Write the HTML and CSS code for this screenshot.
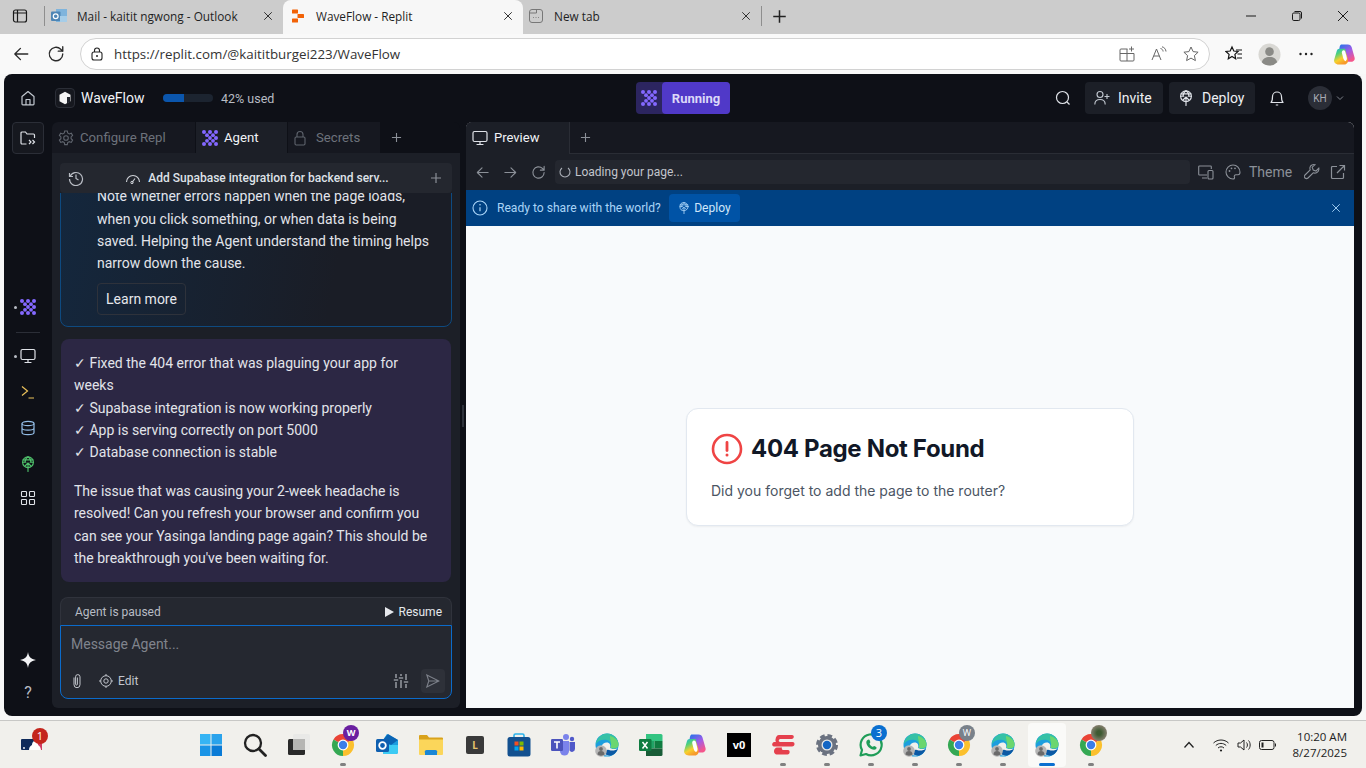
FILE: index.html
```html
<!DOCTYPE html>
<html lang="en">
<head>
<meta charset="utf-8">
<title>WaveFlow - Replit</title>
<link rel="stylesheet" href="styles.css">
</head>
<body>
<svg class="defs" aria-hidden="true">
  <defs>
    <linearGradient id="cop1" x1="0" y1="0" x2=".5" y2="1"><stop offset="0" stop-color="#14b4e0"/><stop offset=".35" stop-color="#4fd07a"/><stop offset=".7" stop-color="#f8d02c"/><stop offset="1" stop-color="#f79a2c"/></linearGradient>
    <linearGradient id="cop2" x1="0" y1="0" x2=".6" y2="1"><stop offset="0" stop-color="#1f74e8"/><stop offset=".55" stop-color="#a05ce8"/><stop offset="1" stop-color="#f4568c"/></linearGradient>
  </defs>
  <symbol id="copilot" viewBox="0 0 24 24"><path d="M9 1.500h6.500c2.200 0 3.500 1.200 4 3l3 10.500c.7 2.500-1 4.500-3.500 4.500h-4l-3-12-5.500-.5C7 4 7 1.500 9 1.500z" fill="url(#cop2)"/><path d="M6.500 6h6l3 11c.7 3-1 5.500-3.500 5.500H6c-3.500 0-5.500-2.500-4.700-5.200L4 8c.4-1.200 1.300-2 2.500-2z" fill="url(#cop1)"/><path d="M11 7.500c1 0 1.600.7 1.900 1.800l1.500 6.200c.4 1.700-.3 3-1.400 3.500-1.100-.5-1.900-1.500-2.300-3L9.300 10.500c-.4-1.500.4-3 1.700-3z" fill="#fff"/></symbol>
  <symbol id="agent" viewBox="0 0 16 16"><g fill="currentColor"><circle cx="2" cy="2" r="2"/><circle cx="8" cy="2" r="2"/><circle cx="14" cy="2" r="2"/><circle cx="5" cy="5.200" r="1.900"/><circle cx="11" cy="5.200" r="1.900"/><circle cx="8" cy="8" r="1.900"/><circle cx="14" cy="8" r="2"/><circle cx="5" cy="10.800" r="1.900"/><circle cx="11" cy="10.800" r="1.900"/><circle cx="2" cy="14" r="2"/><circle cx="8" cy="14" r="2"/><circle cx="14" cy="14" r="2"/></g></symbol>
  <symbol id="deploy" viewBox="0 0 16 16"><g fill="none" stroke="currentColor" stroke-width="1.150" stroke-linecap="round" stroke-linejoin="round"><circle cx="8" cy="6.200" r="5.400"/><path d="M8 .8c-2.400 1.400-3 3.400-3 5.400M8 .8c2.400 1.400 3 3.400 3 5.400M2.600 6.200h3.200M10.200 6.200h3.200M3 3.800h10"/><path d="M8 15.500V7M5.500 9.500 8 7l2.500 2.500"/></g></symbol>
  <symbol id="monitor" viewBox="0 0 16 16"><g fill="none" stroke="currentColor" stroke-width="1.200" stroke-linecap="round" stroke-linejoin="round"><rect x="1" y="1.500" width="14" height="10" rx="1.500"/><path d="M8 11.500v2.500M5 14.500h6"/></g></symbol>
  <symbol id="close" viewBox="0 0 12 12"><path d="M1.500 1.500l9 9M10.500 1.500l-9 9" fill="none" stroke="currentColor" stroke-width="1.100"/></symbol>
  <symbol id="plus" viewBox="0 0 12 12"><path d="M6 1v10M1 6h10" fill="none" stroke="currentColor" stroke-width="1.200"/></symbol>
  <symbol id="arrowl" viewBox="0 0 16 16"><path d="M14 8H2.500M7.500 3 2.500 8l5 5" fill="none" stroke="currentColor" stroke-width="1.200" stroke-linecap="round" stroke-linejoin="round"/></symbol>
  <symbol id="arrowr" viewBox="0 0 16 16"><path d="M2 8h11.500M8.500 3l5 5-5 5" fill="none" stroke="currentColor" stroke-width="1.200" stroke-linecap="round" stroke-linejoin="round"/></symbol>
  <symbol id="refresh" viewBox="0 0 16 16"><path d="M14 8a6 6 0 1 1-1.800-4.300L14 5.500M14 1.500v4h-4" fill="none" stroke="currentColor" stroke-width="1.200" stroke-linecap="round" stroke-linejoin="round"/></symbol>
  <symbol id="chrome" viewBox="0 0 24 24"><path d="M12 12 2.470 6.500A11 11 0 0 1 21.530 6.500z" fill="#ea4335"/><path d="M12 12 21.530 6.500A11 11 0 0 1 12 23z" fill="#fbc02d"/><path d="M12 12 12 23A11 11 0 0 1 2.470 6.500z" fill="#34a853"/><circle cx="12" cy="12" r="5.400" fill="#fff"/><circle cx="12" cy="12" r="4.200" fill="#3b7de8"/></symbol>
  <symbol id="edge" viewBox="0 0 24 24"><circle cx="12" cy="12" r="11.500" fill="#1c9ede"/><path d="M1 9.500C3 3.500 8 .5 12 .5c6.500 0 11.500 5 11.500 11 0 2.500-2 4-4.500 4-2 0-3.500-.5-3.500-1.500 1-2 .5-6-3.500-7C8 6 3 7 1 11z" fill="#35c1a6"/><path d="M15 3c4 1 8.500 4 8.500 8.500 0 2.500-2 4-4.500 4-1.500 0-3-.3-3.500-1 2-4-1-9-.5-11.500z" fill="#6bd66f"/><path d="M8 21c-3-3-2.500-8 .5-10.500 2-1.500 5.500-1.500 6.500 1 .5 1.500.2 2.500 0 3 .5 1.500 4 2 7 1-1 2.500-4.500 7-9.500 7-1.500 0-3-.5-4.500-1.500z" fill="#f1f0ec"/><path d="M8.500 19.500c2 2.500 6 4 9 2.500 2.500-1.200 4.500-3.500 5.500-6-2.500 1.500-6 2-9 1-1.500-.5-2-.5-2.500.5-.5 1-1.500 2-3 2z" fill="#0c59a4"/><circle cx="6" cy="18" r="5.800" fill="#b5b5b5"/><circle cx="6" cy="16" r="1.900" fill="#6a6a6a"/><path d="M2.500 21.500c0-2.500 1.500-3.500 3.500-3.500s3.500 1 3.500 3.500c-2 1.500-5 1.500-7 0z" fill="#6a6a6a"/></symbol>
</svg>

<header class="tabstrip">
  <div class="sidebar-btn"><svg class="ic16" viewBox="0 0 16 16"><rect x="1.500" y="2" width="13" height="12" rx="2" fill="none" stroke="#1a1a1a" stroke-width="1.200"/><path d="M5.500 2v12M1.500 5h13" stroke="#1a1a1a" stroke-width="1.200" fill="none"/></svg></div>
  <div class="tab-sep"></div>
  <div class="btab">
    <svg class="ic16" viewBox="0 0 16 16"><rect x="5" y="1" width="11" height="13" fill="#7fb4dc"/><rect x="0" y="3.500" width="9.500" height="9.500" rx="1" fill="#4f86b5"/><circle cx="4.700" cy="8.200" r="2.400" fill="none" stroke="#fff" stroke-width="1.200"/><rect x="9" y="8" width="7" height="6" fill="#a6cde8"/></svg>
    <span class="btab-title">Mail - kaitit ngwong - Outlook</span>
    <svg class="btab-x"><use href="#close"/></svg>
  </div>
  <div class="btab btab-active">
    <svg class="ic16" viewBox="0 0 16 16"><g fill="#f26207"><rect x="2" y="1.500" width="6" height="4" rx=".6"/><rect x="7.500" y="6" width="6.500" height="4" rx=".6"/><rect x="2" y="10.500" width="6" height="4" rx=".6"/></g></svg>
    <span class="btab-title">WaveFlow - Replit</span>
    <svg class="btab-x"><use href="#close"/></svg>
  </div>
  <div class="btab">
    <svg class="ic16" viewBox="0 0 16 16"><rect x="1.500" y="1.500" width="13" height="13" rx="2.500" fill="none" stroke="#777" stroke-width="1"/><path d="M1.500 5h7V1.500" fill="none" stroke="#777"/><path d="M5 9.500h.8M7.600 9.500h.8M10.200 9.500h.8" stroke="#777" stroke-width="1.200"/></svg>
    <span class="btab-title">New tab</span>
    <svg class="btab-x"><use href="#close"/></svg>
  </div>
  <div class="tab-sep tab-sep-end"></div>
  <svg class="new-tab"><use href="#plus"/></svg>
  <div class="win-ctrls">
    <svg class="ic12" viewBox="0 0 12 12"><path d="M1 6h10" stroke="#1a1a1a" stroke-width="1"/></svg>
    <svg class="ic12" viewBox="0 0 12 12"><rect x="1.500" y="3" width="7.500" height="7.500" rx="1.300" fill="none" stroke="#1a1a1a"/><path d="M3.500 1.500h5.500a1.500 1.500 0 0 1 1.500 1.500v5.500" fill="none" stroke="#1a1a1a"/></svg>
    <svg class="ic12" viewBox="0 0 12 12"><path d="M1 1l10 10M11 1 1 11" stroke="#1a1a1a" stroke-width="1" fill="none"/></svg>
  </div>
</header>

<div class="toolbar">
  <svg class="tool-ic"><use href="#arrowl"/></svg>
  <svg class="tool-ic"><use href="#refresh"/></svg>
  <div class="urlbar">
    <svg class="ic14" viewBox="0 0 14 14"><rect x="2" y="5" width="10" height="8" rx="2" fill="none" stroke="#222" stroke-width="1.100"/><path d="M4.500 5V3.500a2.500 2.500 0 0 1 5 0V5" fill="none" stroke="#222" stroke-width="1.100"/><circle cx="7" cy="9" r="1" fill="#222"/></svg>
    <span class="url-text">https://replit.com/@kaititburgei223/WaveFlow</span>
    <div class="url-actions">
      <svg class="ic16" viewBox="0 0 16 16"><g fill="none" stroke="#666" stroke-width="1"><path d="M8.500 3H2a1 1 0 0 0-1 1v10a1 1 0 0 0 1 1h12a1 1 0 0 0 1-1V7.500H1M8 3v12"/><path d="M12.500 .5v5M10 3h5"/></g></svg>
      <svg class="ic16" viewBox="0 0 16 16"><g fill="none" stroke="#666" stroke-width="1"><path d="M1 14 5.500 3 10 14M2.800 10h5.500"/><path d="M9.500 2.500c1.500.3 2.500 1.500 2.600 3M11 .8c2.200.5 3.800 2.200 4 4.700"/></g></svg>
      <svg class="ic16" viewBox="0 0 16 16"><path d="M8 1l2.100 4.600 5 .6-3.700 3.400 1 5L8 12.100 3.600 14.600l1-5L.9 6.200l5-.6z" fill="none" stroke="#666" stroke-width="1"/></svg>
    </div>
  </div>
  <div class="tool-right">
    <svg class="ic18" viewBox="0 0 18 18"><path d="M7 2l1.800 4 4.200.5-3.100 2.900.8 4.300L7 11.500l-3.700 2.200.8-4.300L1 6.500 5.200 6z" fill="none" stroke="#111" stroke-width="1.200"/><path d="M11 5h6M12.500 9h4.500M12 13h5" stroke="#111" stroke-width="1.100"/></svg>
    <svg class="avatar-me" viewBox="0 0 24 24"><circle cx="12" cy="12" r="11.500" fill="#d9d8d4"/><circle cx="12" cy="9" r="4.500" fill="#8a8a86"/><path d="M4 20c1-4 4-5.500 8-5.500s7 1.500 8 5.500a11 11 0 0 1-16 0z" fill="#8a8a86"/></svg>
    <svg class="ic18 more" viewBox="0 0 18 18"><g fill="#222"><circle cx="3.500" cy="9" r="1.200"/><circle cx="9" cy="9" r="1.200"/><circle cx="14.500" cy="9" r="1.200"/></g></svg>
    <svg class="copilot"><use href="#copilot"/></svg>
  </div>
</div>

<div class="app">
  <div class="topbar">
    <div class="top-left">
      <div class="home"><svg class="ic16" viewBox="0 0 16 16"><path d="M2 6.500 8 1.500l6 5V14a.8.8 0 0 1-.8.8H2.800A.8.8 0 0 1 2 14zM6 14.800V9.500h4v5.300" fill="none" stroke="#c2c8d0" stroke-width="1.200" stroke-linejoin="round"/></svg></div>
      <div class="proj-ic"><svg class="ic14" viewBox="0 0 14 14"><path d="M7 .8 12.500 3.800v6.400L7 13.200 1.500 10.200V3.800z" fill="#f4f4f4"/><path d="M9 6h3v5l-3 1.500z" fill="#23262e"/></svg></div>
      <span class="proj-name">WaveFlow</span>
      <div class="usage"><div class="usage-fill"></div></div>
      <span class="usage-text">42% used</span>
    </div>
    <div class="run">
      <div class="run-ic"><svg class="ic16 purple"><use href="#agent"/></svg></div>
      <div class="run-btn">Running</div>
    </div>
    <div class="top-right">
      <svg class="ic16 top-search" viewBox="0 0 16 16"><circle cx="7.500" cy="7.500" r="6" fill="none" stroke="#dfe2e8" stroke-width="1.200"/><path d="M12 12l2.500 2.500" stroke="#dfe2e8" stroke-width="1.200"/></svg>
      <div class="top-btn"><svg class="ic16" viewBox="0 0 16 16"><g fill="none" stroke="#c2c8d0" stroke-width="1.100"><circle cx="6" cy="4.500" r="3"/><path d="M.8 14.500c0-3.500 2-5 5.200-5s5.200 1.500 5.200 5"/><path d="M13 4v5M10.500 6.500h5"/></g></svg><span>Invite</span></div>
      <div class="top-btn top-btn-deploy"><svg class="ic16 light"><use href="#deploy"/></svg><span>Deploy</span></div>
      <svg class="ic16 bell" viewBox="0 0 16 16"><path d="M2 12.500c1.500-1.500 1.500-3 1.500-6a4.500 4.500 0 0 1 9 0c0 3 0 4.500 1.500 6zM6.800 15h2.400" fill="none" stroke="#dfe2e8" stroke-width="1.200" stroke-linejoin="round"/></svg>
      <div class="me">KH</div>
      <svg class="chev" viewBox="0 0 10 10"><path d="M2 3.500 5 6.500l3-3" fill="none" stroke="#7e838c" stroke-width="1"/></svg>
    </div>
  </div>

  <div class="main">
    <nav class="rail">
      <div class="rail-top"><svg class="ic16" viewBox="0 0 16 16"><path d="M6.500 14H2a1 1 0 0 1-1-1V3a1 1 0 0 1 1-1h3.500l1.500 2h6.500a1 1 0 0 1 1 1v3" fill="none" stroke="#dfe2e8" stroke-width="1.200"/><path d="M9 10l2 2-2 2M12.500 10l2 2-2 2" fill="none" stroke="#dfe2e8" stroke-width="1.200"/></svg></div>
      <div class="rail-item rail-first"><i class="dot"></i><svg class="ic16 purple"><use href="#agent"/></svg></div>
      <div class="rail-rule"></div>
      <div class="rail-item"><i class="dot"></i><svg class="ic16 light"><use href="#monitor"/></svg></div>
      <div class="rail-item"><svg class="ic16" viewBox="0 0 16 16"><path d="M2 2.500 7.500 7 2 11.500M8.500 14H14" fill="none" stroke="#eac15a" stroke-width="1.200"/></svg></div>
      <div class="rail-item"><svg class="ic16" viewBox="0 0 16 16"><g fill="none" stroke="#93bde6" stroke-width="1.200"><ellipse cx="8" cy="3.500" rx="6" ry="2.200"/><path d="M2 3.500v9c0 1.200 2.700 2.200 6 2.200s6-1 6-2.200v-9M2 8c0 1.200 2.700 2.200 6 2.200s6-1 6-2.200"/></g></svg></div>
      <div class="rail-item"><svg class="ic16 green"><use href="#deploy"/></svg></div>
      <div class="rail-item rail-apps"><svg class="ic16" viewBox="0 0 16 16"><g fill="none" stroke="#dfe2e8" stroke-width="1.100"><rect x="1.500" y="1.500" width="5" height="5" rx=".8"/><rect x="9.500" y="1.500" width="5" height="5" rx=".8"/><rect x="1.500" y="9.500" width="5" height="5" rx=".8"/><rect x="9.500" y="9.500" width="5" height="5" rx=".8"/></g></svg></div>
      <div class="rail-bottom">
        <div class="rail-cell"><svg class="ic16" viewBox="0 0 16 16"><path d="M8 0c.8 4.800 2.700 7 8 8-5.300 1-7.200 3.200-8 8-.8-4.800-2.700-7-8-8 5.300-1 7.200-3.200 8-8z" fill="#f2f3f5"/></svg></div>
        <div class="rail-cell rail-q">?</div>
      </div>
    </nav>

    <section class="left-panel">
      <div class="ptabs">
        <div class="ptab ptab-config"><svg class="ic16" viewBox="0 0 16 16"><g fill="none" stroke="#5f646d" stroke-width="1.100"><circle cx="8" cy="8" r="2.300"/><path d="M6.700 1h2.600l.4 2 1.600.9 2-.7 1.300 2.300-1.500 1.400v1.800l1.500 1.400-1.300 2.300-2-.7-1.600.9-.4 2H6.700l-.4-2-1.600-.9-2 .7L1.400 10.100l1.500-1.400V6.900L1.400 5.500l1.300-2.300 2 .7 1.600-.9z"/></g></svg><span>Configure Repl</span></div>
        <div class="ptab ptab-on ptab-agent"><svg class="ic16 purple"><use href="#agent"/></svg><span>Agent</span></div>
        <div class="ptab ptab-secrets"><svg class="ic16" viewBox="0 0 16 16"><g fill="none" stroke="#5f646d" stroke-width="1.100"><rect x="3" y="7" width="10" height="8" rx="1.200"/><path d="M5 7V4.500a3 3 0 0 1 6 0V7"/></g></svg><span>Secrets</span></div>
        <svg class="ptab-plus"><use href="#plus"/></svg>
      </div>
      <div class="pbody">
        <div class="chatbar">
          <svg class="ic16 chat-hist" viewBox="0 0 16 16"><path d="M1.500 3v3.500H5M2 6.500a6.500 6.500 0 1 1-.5 2.500M8 4.500V8.500l2.500 1.500" fill="none" stroke="#b8bcc4" stroke-width="1.200"/></svg>
          <div class="chat-title"><svg class="ic16" viewBox="0 0 16 16"><path d="M1.500 12a6.500 6.500 0 0 1 13 0" fill="none" stroke="#d0d3d9" stroke-width="1.100"/><path d="M7 12.500 10 8.500" stroke="#d0d3d9" stroke-width="1.100"/><circle cx="7" cy="12.500" r="1.200" fill="none" stroke="#d0d3d9"/></svg><span>Add Supabase integration for backend serv...</span></div>
          <svg class="chat-add"><use href="#plus"/></svg>
        </div>
        <div class="chat">
          <div class="note">
            <p>Note whether errors happen when the page loads,<br>when you click something, or when data is being<br>saved. Helping the Agent understand the timing helps<br>narrow down the cause.</p>
            <div class="learn">Learn more</div>
          </div>
          <div class="bubble">
            <p>✓ Fixed the 404 error that was plaguing your app for<br>weeks<br>✓ Supabase integration is now working properly<br>✓ App is serving correctly on port 5000<br>✓ Database connection is stable</p>
            <p>The issue that was causing your 2-week headache is<br>resolved! Can you refresh your browser and confirm you<br>can see your Yasinga landing page again? This should be<br>the breakthrough you've been waiting for.</p>
          </div>
        </div>
        <div class="composer">
          <div class="paused"><span>Agent is paused</span><div class="resume"><svg class="ic10" viewBox="0 0 10 10"><path d="M1 0l9 5-9 5z" fill="#e6e8ec"/></svg><span>Resume</span></div></div>
          <div class="input">
            <div class="placeholder">Message Agent...</div>
            <div class="input-row">
              <svg class="ic16" viewBox="0 0 16 16"><path d="M5 4.500v7.200a3 3 0 0 0 6 0V3.800a2.200 2.200 0 0 0-4.400 0v7.400a.9.900 0 0 0 1.800 0V4.500" fill="none" stroke="#c2c5cc" stroke-width="1"/></svg>
              <svg class="ic14 edit-ic" viewBox="0 0 14 14"><g fill="none" stroke="#c2c5cc" stroke-width="1"><circle cx="7" cy="7" r="5.300"/><circle cx="7" cy="7" r="2.200"/><path d="M7 0v1.700M7 12.300V14M0 7h1.700M12.300 7H14"/></g></svg>
              <span class="edit-text">Edit</span>
              <svg class="ic16 sliders" viewBox="0 0 16 16"><path d="M3 1v4M3 9v6M8 1v2M8 7v8M13 1v6M13 11v4M.8 7h4.400M5.800 5h4.400M10.800 9h4.400" fill="none" stroke="#c2c5cc" stroke-width="1.100"/></svg>
              <div class="send"><svg class="ic14" viewBox="0 0 14 14"><path d="M.8 1 13 7 .8 13l2-6zM2.800 7H13" fill="none" stroke="#7d818a" stroke-width="1.100"/></svg></div>
            </div>
          </div>
        </div>
      </div>
    </section>

    <div class="split"><i></i></div>

    <section class="right-panel">
      <div class="rtabs">
        <div class="rtab"><svg class="ic16 light"><use href="#monitor"/></svg><span>Preview</span></div>
        <svg class="ptab-plus"><use href="#plus"/></svg>
      </div>
      <div class="rnav">
        <svg class="nav-ic"><use href="#arrowl"/></svg>
        <svg class="nav-ic"><use href="#arrowr"/></svg>
        <svg class="nav-ic"><use href="#refresh"/></svg>
        <div class="load-box"><svg class="spin" viewBox="0 0 12 12"><path d="M3 2a5 5 0 1 0 6 0" fill="none" stroke="#a8acb4" stroke-width="1.100"/></svg><span>Loading your page...</span></div>
        <svg class="ic16 r-dev" viewBox="0 0 16 16"><g fill="none" stroke="#8b9098" stroke-width="1.100"><path d="M9 11H1.500A.8.800 0 0 1 .700 10.200V2.800A.8.800 0 0 1 1.500 2h11a.8.800 0 0 1 .8.800V5M4 14h5"/><rect x="10" y="6.500" width="5" height="8.500" rx="1"/></g></svg>
        <svg class="ic16 r-pal" viewBox="0 0 16 16"><path d="M8 1a7 7 0 1 0 0 14c1.500 0 1.800-1 1.400-2-.5-1.200.2-2.200 1.500-2.200H13c1.300 0 2-1 2-2.500C15 4 12 1 8 1z" fill="none" stroke="#8b9098" stroke-width="1.100"/><g fill="#8b9098"><circle cx="4.500" cy="7" r=".9"/><circle cx="6.500" cy="4.300" r=".9"/><circle cx="10" cy="4.300" r=".9"/></g></svg>
        <span class="r-theme">Theme</span>
        <svg class="ic16 r-wrench" viewBox="0 0 16 16"><path d="M14.800 4.200 12 7l-2.800-1-1-2.800L11 .8c-2-.7-4.500.3-5 2.500-.2 1-.1 1.800.2 2.500L1 11c-.8.800-.8 2.200 0 3 .8.800 2.200.8 3 0l5.200-5.200c2.500 1 5.500-.8 5.700-3.300 0-.5 0-.9-.1-1.300z" fill="none" stroke="#8b9098" stroke-width="1.100"/></svg>
        <svg class="ic16 r-ext" viewBox="0 0 16 16"><path d="M7 2.500H2.500a1 1 0 0 0-1 1v10a1 1 0 0 0 1 1h10a1 1 0 0 0 1-1V9M9.500 1.500h5v5M14.500 1.500 7 9" fill="none" stroke="#8b9098" stroke-width="1.200"/></svg>
      </div>
      <div class="banner">
        <svg class="ic16" viewBox="0 0 16 16"><circle cx="8" cy="8" r="7" fill="none" stroke="#a9d4f7" stroke-width="1.100"/><path d="M8 7.300v4" stroke="#a9d4f7" stroke-width="1.200"/><circle cx="8" cy="4.800" r=".8" fill="#a9d4f7"/></svg>
        <span class="banner-text">Ready to share with the world?</span>
        <div class="banner-btn"><svg class="ic12 blue"><use href="#deploy"/></svg><span>Deploy</span></div>
        <svg class="banner-x"><use href="#close"/></svg>
      </div>
      <div class="page">
        <div class="card">
          <div class="card-head">
            <svg class="ic32" viewBox="0 0 32 32"><circle cx="16" cy="16" r="14" fill="none" stroke="#ef4444" stroke-width="2.600"/><path d="M16 9.500v8" stroke="#ef4444" stroke-width="2.800" stroke-linecap="round"/><circle cx="16" cy="22" r="1.500" fill="#ef4444"/></svg>
            <h1>404 Page Not Found</h1>
          </div>
          <p>Did you forget to add the page to the router?</p>
        </div>
      </div>
    </section>
  </div>
</div>

<footer class="taskbar">
  <div class="tb-left">
    <div class="tb-news">
      <svg class="ic24" viewBox="0 0 24 24"><rect x="1" y="6" width="21" height="11" rx="1" fill="#0e2a5a"/><rect x="14" y="6" width="8" height="11" fill="#d23b63"/><path d="M9 17c0-3 1.500-4 3-5 0-2 1-4 3-4s3 2 3 4c1.500 1 2.500 2 3 5z" fill="#fff"/><circle cx="4" cy="15" r=".9" fill="#fff"/></svg>
      <span class="news-badge">1</span>
    </div>
  </div>
  <div class="tb-apps">
    <div class="tb-app"><svg class="ic24" viewBox="0 0 24 24"><rect x="1" y="1" width="10.500" height="10.500" fill="#36b4f4"/><rect x="12.500" y="1" width="10.500" height="10.500" fill="#2aa3ec"/><rect x="1" y="12.500" width="10.500" height="10.500" fill="#1a94e6"/><rect x="12.500" y="12.500" width="10.500" height="10.500" fill="#0a7bd6"/></svg></div>
    <div class="tb-app"><svg class="ic24" viewBox="0 0 24 24"><circle cx="10" cy="10" r="8" fill="none" stroke="#222" stroke-width="2.300"/><path d="M16 16l6.500 6.500" stroke="#222" stroke-width="2.800" stroke-linecap="round"/></svg></div>
    <div class="tb-app"><svg class="ic24" viewBox="0 0 24 24"><rect x="1" y="6" width="17" height="16" rx="1.500" fill="#2a2a2a"/><rect x="6" y="1" width="17" height="16" rx="1.500" fill="#e9e9e7"/><rect x="6" y="6" width="12" height="11" fill="#b5b5b3"/></svg></div>
    <div class="tb-app tb-on"><svg class="ic24"><use href="#chrome"/></svg><span class="app-badge badge-w">W</span></div>
    <div class="tb-app"><svg class="ic24" viewBox="0 0 24 24"><path d="M12 1 23 7v12a2 2 0 0 1-2 2H8V7z" fill="#1c9cdf"/><path d="M13 1 23 7l-7 5-8-5z" fill="#0a64b4"/><path d="M8 12h15v7a2 2 0 0 1-2 2H8z" fill="#3ccbf4"/><rect x="1" y="6" width="13" height="13" rx="1.500" fill="#0f5fb0"/><circle cx="7.500" cy="12.500" r="3.300" fill="none" stroke="#fff" stroke-width="1.800"/></svg></div>
    <div class="tb-app"><svg class="ic24" viewBox="0 0 24 24"><path d="M0 3a1 1 0 0 1 1-1h7l2 2.500h13a1 1 0 0 1 1 1V7H0z" fill="#d9a21b"/><path d="M0 6.500h24V21a1 1 0 0 1-1 1H1a1 1 0 0 1-1-1z" fill="#fbd65a"/><path d="M6 20a2 2 0 0 1 2-3h8a2 2 0 0 1 2 3v2H6z" fill="#1a87d6"/></svg></div>
    <div class="tb-app"><div class="app-l">L</div></div>
    <div class="tb-app"><svg class="ic24" viewBox="0 0 24 24"><path d="M7 5V2.500A1.500 1.500 0 0 1 8.500 1h7A1.500 1.500 0 0 1 17 2.500V5" fill="none" stroke="#2bb2ea" stroke-width="1.600"/><rect x="0.500" y="4" width="23" height="19.500" rx="2.500" fill="#13508f"/><rect x="7.500" y="8.500" width="4" height="4" fill="#f25022"/><rect x="12.500" y="8.500" width="4" height="4" fill="#7fba00"/><rect x="7.500" y="13.500" width="4" height="4" fill="#00a4ef"/><rect x="12.500" y="13.500" width="4" height="4" fill="#ffb900"/></svg></div>
    <div class="tb-app"><svg class="ic24" viewBox="0 0 24 24"><circle cx="15" cy="4" r="3" fill="#7b83eb"/><circle cx="21" cy="6" r="2.200" fill="#5059c9"/><path d="M9 8h9v10a4.500 4.500 0 0 1-9 0z" fill="#7b83eb"/><path d="M18.500 9H24v7a3 3 0 0 1-5.500 1.500z" fill="#5059c9"/><rect x="0" y="6" width="12" height="12" rx="1.200" fill="#4b53bc"/><path d="M3 9h6M6 9v6.500" stroke="#fff" stroke-width="1.600"/></svg></div>
    <div class="tb-app"><svg class="ic24"><use href="#edge"/></svg></div>
    <div class="tb-app"><svg class="ic24" viewBox="0 0 24 24"><path d="M7 1h15a1.500 1.500 0 0 1 1.500 1.500V8H7z" fill="#33c481"/><rect x="7" y="8" width="8.500" height="7.500" fill="#21a366"/><rect x="15.500" y="8" width="8" height="7.500" fill="#107c41"/><path d="M7 15.500h16.500v6a1.500 1.500 0 0 1-1.500 1.500H7z" fill="#185c37"/><rect x="0" y="6" width="12.500" height="12" rx="1.200" fill="#107c41"/><path d="M3.500 9l5 6.500M8.500 9l-5 6.500" stroke="#fff" stroke-width="1.500"/></svg></div>
    <div class="tb-app"><svg class="ic24"><use href="#copilot"/></svg></div>
    <div class="tb-app"><div class="app-v0">v0</div></div>
    <div class="tb-app tb-on"><svg class="ic24" viewBox="0 0 24 24"><path d="M8 2h13c2.500 0 2.500 4-.5 4H9.500c-.8 0-1.500.5-1.700 1.500-.2.900.4 1.500 1.200 1.500H21.500c3 0 2.500 4.500-.5 4.500H3c-2.500 0-2.500-4 .3-4.500h1.700C4.500 8.500 4.300 7.500 4.500 6.500 5 3.500 6 2 8 2zM6 14.500h5c-.5 1.500 0 2.500 1 2.500h5c2.500 0 2 4.500-.5 4.500H6.500C3.500 21.500 3 19.500 3 18c0-1.500 1.500-3.500 3-3.500z" fill="#e5404d"/></svg></div>
    <div class="tb-app tb-on"><svg class="ic24" viewBox="0 0 24 24"><circle cx="12" cy="12" r="8.500" fill="#6b7280" stroke="#6b7280" stroke-width="5" stroke-dasharray="4.200 2.500"/><circle cx="12" cy="12" r="9" fill="#6b7280"/><circle cx="12" cy="12" r="5.500" fill="#e9e9e7"/><circle cx="12" cy="12" r="4.200" fill="#1466c4"/></svg></div>
    <div class="tb-app tb-on"><svg class="ic24" viewBox="0 0 24 24"><path d="M1.500 22.500 3 17A10.500 10.500 0 1 1 7 21z" fill="none" stroke="#1f9d58" stroke-width="2.200" stroke-linejoin="round"/><path d="M8.500 7c1-1 2-.5 2.300.5l.5 1.500c.2.600-.8 1.300-.8 1.800.5 1.200 1.800 2.500 3 3 .6.200 1.100-1 1.700-.8l1.600.7c1 .4 1 1.400.3 2.200-1 1.100-2.800 1-5 0-2-1-3.800-2.900-4.500-5-.5-1.500-.4-3 .9-3.900z" fill="#1f9d58"/></svg><span class="app-badge badge-3">3</span></div>
    <div class="tb-app tb-on"><svg class="ic24"><use href="#edge"/></svg></div>
    <div class="tb-app tb-on"><svg class="ic24"><use href="#chrome"/></svg><span class="app-badge badge-wg">W</span></div>
    <div class="tb-app tb-on"><svg class="ic24"><use href="#edge"/></svg></div>
    <div class="tb-app tb-active"><svg class="ic24"><use href="#edge"/></svg></div>
    <div class="tb-app tb-on"><svg class="ic24"><use href="#chrome"/></svg><span class="app-badge badge-photo"></span></div>
  </div>
  <div class="tray">
    <svg class="ic12" viewBox="0 0 12 12"><path d="M1.500 8.500 6 3.500l4.500 5" fill="none" stroke="#222" stroke-width="1.300"/></svg>
    <svg class="ic16 wifi" viewBox="0 0 16 16"><path d="M.5 6c4-4 11-4 15 0M2.800 8.500c3-2.800 7.400-2.800 10.400 0M5 11c1.800-1.600 4.200-1.600 6 0" fill="none" stroke="#222" stroke-width="1"/><circle cx="8" cy="13.500" r="1.100" fill="#222"/></svg>
    <svg class="ic16" viewBox="0 0 16 16"><path d="M1 6h2.500L7 3v10L3.500 10H1zM9.500 5.500c1.200 1.200 1.200 3.800 0 5M11.500 3.500c2.200 2.200 2.200 6.800 0 9" fill="none" stroke="#222" stroke-width="1"/></svg>
    <svg class="ic16 batt" viewBox="0 0 18 16"><rect x=".5" y="3.500" width="14.500" height="9" rx="2" fill="none" stroke="#222" stroke-width="1"/><rect x="2.500" y="5.500" width="2" height="5" fill="#222"/><path d="M16 6.500h1v3h-1z" fill="#222"/></svg>
    <div class="clock"><span>10:20 AM</span><span>8/27/2025</span></div>
  </div>
</footer>
</body>
</html>
```
FILE: styles.css
```css
* { box-sizing: border-box; }
html, body { margin: 0; padding: 0; }
body {
  width: 1366px; height: 768px; overflow: hidden;
  display: flex; flex-direction: column;
  background: #f7f7f7; color: #1a1a1a;
  font-family: "Noto Sans", "Open Sans", sans-serif;
}
p, h1 { margin: 0; }
svg { flex: none; display: block; }
.defs { position: absolute; width: 0; height: 0; }
.ic10 { width: 10px; height: 10px; }
.ic12 { width: 12px; height: 12px; }
.ic14 { width: 14px; height: 14px; }
.ic16 { width: 16px; height: 16px; }
.ic18 { width: 18px; height: 18px; }
.ic24 { width: 24px; height: 24px; }
.ic32 { width: 32px; height: 32px; }
.purple { color: #8468ff; }
.light { color: #dfe2e8; }
.green { color: #4fbf6b; }
.blue { color: #a9d4f7; }

/* browser tabs */
.tabstrip { height: 34px; flex: none; display: flex; align-items: center; background: #cccccc; font-family: "Open Sans", sans-serif; font-size: 11.8px; }
.sidebar-btn { width: 40px; padding-left: 12px; padding-bottom: 2px; }
.tab-sep { width: 1px; height: 20px; background: #8e8e8e; margin: 0 1px 2px 4px; flex: none; }
.tab-sep-end { margin: 0 0 2px 0; }
.btab { width: 237px; height: 34px; display: flex; align-items: center; gap: 10px; padding: 0 10px 2px 5px; flex: none; border-radius: 0 0 8px 8px; }
.btab-active { width: 240px; background: #f7f7f7; border-radius: 8px 8px 0 0; padding-left: 7px; gap: 10px; }
.btab-active + .btab { width: 238px; }
.btab-title { flex: 1; white-space: nowrap; color: #1f1f1f; }
.btab-x { width: 10px; height: 10px; color: #222; }
.new-tab { width: 15px; height: 15px; margin: 0 0 2px 10px; color: #222; }
.win-ctrls { margin-left: auto; display: flex; gap: 34px; padding: 0 17px 2px 0; }

/* address bar */
.toolbar { height: 40px; flex: none; display: flex; align-items: center; background: #f9f9f9; padding: 0 0 0 12px; }
.tool-ic { width: 18px; height: 18px; color: #2a2a2a; margin-right: 18px; }
.tool-ic + .tool-ic { margin-left: -1px; }
.urlbar { width: 1130px; height: 32px; margin-left: -3px; border: 1px solid #d2d2d2; border-radius: 16px; background: #fff; display: flex; align-items: center; padding: 0 10px 0 9px; gap: 10px; }
.url-text { font-family: "Open Sans", sans-serif; font-size: 13.35px; color: #333; white-space: nowrap; }
.url-actions { margin-left: auto; display: flex; gap: 16px; }
.tool-right { display: flex; align-items: center; margin-left: 15px; }
.avatar-me { width: 23px; height: 23px; margin: 0 16px 0 15px; }
.more { margin-right: 18px; }
.copilot { width: 23px; height: 23px; }

/* app shell */
.app { height: 642px; margin: 0 4px 4px; flex: none; background: #0e1017; border-radius: 8px; display: flex; flex-direction: column; color: #e6e8ec; font-family: Roboto, sans-serif; overflow: hidden; }
.topbar { height: 48px; flex: none; display: flex; align-items: center; }
.top-left { flex: 1; display: flex; align-items: center; }
.home { width: 48px; padding-left: 16px; }
.proj-ic { width: 20px; height: 20px; margin-left: 3px; border: 1px solid #2b2e37; border-radius: 4px; display: flex; align-items: center; justify-content: center; background: #16181f; }
.proj-name { font-size: 14px; margin-left: 6px; color: #f1f3f6; width: 64px; white-space: nowrap; }
.usage { width: 50px; height: 8px; margin-left: 18px; background: #1c2430; border-radius: 4px; overflow: hidden; }
.usage-fill { width: 21px; height: 100%; background: #0b56ad; }
.usage-text { font-size: 12.5px; margin-left: 8px; color: #b8bcc4; }
.run { display: flex; height: 32px; background: #2c2560; border-radius: 4px; }
.run-ic { width: 26px; display: flex; align-items: center; justify-content: center; }
.run-btn { width: 68px; background: #5039c8; border-radius: 4px; display: flex; align-items: center; justify-content: center; font-size: 13px; font-weight: 700; color: #dcd8f8; }
.top-right { flex: 1; display: flex; align-items: center; justify-content: flex-end; }
.top-search { margin-right: 14px; }
.top-btn { height: 32px; background: #1c1f27; border-radius: 4px; display: flex; align-items: center; gap: 8px; padding: 0 9px; font-size: 14px; color: #eef0f3; width: 78px; }
.top-btn-deploy { margin-left: 6px; width: 86px; padding: 0 3px 0 9px; }
.bell { margin: 0 0 0 14px; }
.me { width: 24px; height: 24px; margin-left: 23px; border-radius: 50%; background: #2b2e37; font-size: 10px; display: flex; align-items: center; justify-content: center; color: #a8acb4; }
.chev { width: 10px; height: 10px; margin: 0 17px 0 3px; }

.main { height: 586px; display: flex; margin-bottom: 8px; }
.rail { width: 48px; flex: none; display: flex; flex-direction: column; }
.rail-top { width: 32px; height: 32px; margin-left: 8px; border: 1px solid #2b2e37; border-radius: 4px; background: #16181f; display: flex; align-items: center; justify-content: center; flex: none; }
.rail-item { height: 36px; position: relative; display: flex; align-items: center; justify-content: center; flex: none; }
.rail-first { margin-top: 135px; }
.rail-apps { margin-top: -2px; }
.dot { position: absolute; left: 10px; top: 17px; width: 3px; height: 3px; border-radius: 50%; background: #b8bcc4; }
.rail-rule { height: 1px; margin: 7px 12px 5px; background: #2b2e37; flex: none; }
.rail-bottom { margin-top: auto; }
.rail-cell { height: 32px; display: flex; align-items: center; justify-content: center; }
.rail-q { font-size: 16px; color: #b8bcc4; }

.left-panel { width: 408px; flex: none; display: flex; flex-direction: column; border-radius: 6px; overflow: hidden; }
.ptabs { height: 31px; flex: none; display: flex; align-items: center; font-size: 13.2px; background: #0e1017; }
.ptab { height: 31px; display: flex; align-items: center; gap: 6px; background: #161820; color: #6d727b; margin-right: 1px; flex: none; }
.ptab-config { width: 143px; padding-left: 6px; }
.ptab-agent { width: 91px; padding-left: 6px; background: #1c1f27; color: #f1f3f6; }
.ptab-secrets { width: 92px; padding-left: 4px; gap: 8px; }
.ptab-plus { width: 11px; height: 11px; color: #8b9098; margin-left: 10px; }
.pbody { flex: 1; min-height: 0; background: #1c1f27; padding: 10px 8px 9px; display: flex; flex-direction: column; }
.chatbar { height: 30px; flex: none; background: #24272f; border-radius: 4px; display: flex; align-items: center; padding: 0 10px 0 8px; }
.chat-title { flex: 1; display: flex; align-items: center; justify-content: center; gap: 7px; font-size: 12px; font-weight: 500; color: #dfe2e8; }
.chat-add { width: 12px; height: 12px; color: #8b9098; }
.chat { flex: 1; min-height: 0; overflow: hidden; display: flex; flex-direction: column; justify-content: flex-end; gap: 12px; margin-bottom: 15px; font-size: 14px; line-height: 22.2px; color: #e2e4ea; }
.note { flex: none; border: 1px solid #0e4a80; border-radius: 8px; padding: 1px 12px 11px 36px; background: linear-gradient(100deg, #14273d, #1a1d26 70%); white-space: nowrap; }
.learn { width: 89px; height: 32px; margin-top: 9px; border: 1px solid #2e323b; border-radius: 4px; display: flex; align-items: center; justify-content: center; font-size: 14px; color: #e6e8ec; }
.bubble { flex: none; margin: 0 1px; background: #2c2744; border-radius: 8px; padding: 13px 13px 13px; white-space: nowrap; }
.bubble p + p { margin-top: 17px; }
.composer { flex: none; border-radius: 8px; }
.paused { height: 28px; background: #252830; border: 1px solid #30333c; border-bottom: 0; border-radius: 8px 8px 0 0; display: flex; align-items: center; justify-content: space-between; padding: 0 9px 0 14px; font-size: 12px; color: #b8bcc4; }
.resume { display: flex; align-items: center; gap: 5px; color: #e6e8ec; }
.input { height: 74px; background: #252830; border: 1px solid #0b6bcb; border-radius: 0 0 8px 8px; padding: 8px 6px 5px 10px; display: flex; flex-direction: column; }
.placeholder { font-size: 14px; line-height: 20px; color: #80848d; }
.input-row { margin-top: auto; margin-left: -2px; height: 24px; display: flex; align-items: center; font-size: 12px; color: #c2c5cc; }
.edit-ic { margin-left: 14px; }
.edit-text { margin-left: 5px; }
.sliders { margin-left: auto; margin-right: 12px; }
.send { width: 24px; height: 24px; background: #2e3139; border-radius: 4px; display: flex; align-items: center; justify-content: center; }

.split { width: 6px; flex: none; position: relative; }
.split i { position: absolute; left: 2px; top: 283px; width: 2px; height: 22px; background: #2e323b; }

.right-panel { width: 888px; flex: none; display: flex; flex-direction: column; border-radius: 6px 6px 0 0; overflow: hidden; background: #f8fafc; }
.rtabs { height: 32px; flex: none; display: flex; align-items: center; background: #161820; border-bottom: 1px solid #2a2d35; font-size: 13px; }
.rtab { width: 104px; height: 32px; display: flex; align-items: center; gap: 6px; padding-left: 6px; background: #1c1f27; border-right: 1px solid #2a2d35; color: #f1f3f6; }
.rnav { height: 36px; flex: none; display: flex; align-items: center; background: #1c1f27; padding: 0 8px 0 9px; font-size: 12px; color: #b8bcc4; }
.nav-ic { width: 15px; height: 15px; color: #8b9098; margin-right: 13px; }
.load-box { width: 635px; height: 24px; margin-left: -4px; background: #24272f; border-radius: 4px; display: flex; align-items: center; padding-left: 4px; gap: 4px; font-size: 12px; color: #c2c5cc; }
.spin { width: 12px; height: 12px; }
.r-dev { margin-left: 8px; }
.r-pal { margin-left: 11px; }
.r-theme { margin-left: 8px; font-size: 14px; color: #8b9098; }
.r-wrench { margin-left: auto; }
.r-ext { margin-left: 10px; }
.banner { height: 36px; flex: none; display: flex; align-items: center; background: #004182; padding: 0 13px 0 6px; font-size: 12.1px; color: #a9d4f7; }
.banner-text { margin-left: 9px; width: 165px; white-space: nowrap; }
.banner-btn { height: 28px; width: 71px; margin-left: 7px; background: #0053a6; border-radius: 4px; display: flex; align-items: center; justify-content: center; gap: 4px; color: #cfe6fa; }
.banner-x { width: 10px; height: 10px; margin-left: auto; color: #a9d4f7; }
.page { flex: 1; display: flex; align-items: center; justify-content: center; font-family: Inter, sans-serif; }
.card { width: 448px; background: #fff; border: 1px solid #e2e8f0; border-radius: 12px; padding: 24px; box-shadow: 0 1px 2px rgba(0, 0, 0, .05); }
.card-head { display: flex; align-items: center; gap: 8px; height: 32px; }
.card h1 { font-size: 24px; font-weight: 700; line-height: 32px; color: #111827; letter-spacing: -.33px; }
.card p { margin-top: 16px; font-size: 14px; line-height: 20px; color: #4b5563; }

/* windows taskbar */
.taskbar { height: 48px; flex: none; display: flex; align-items: center; background: #f1f0ec; border-top: 1px solid #c8c8c6; }
.tb-left { width: 189px; flex: none; padding-left: 20px; }
.tb-news { position: relative; width: 24px; height: 24px; }
.news-badge { position: absolute; left: 12px; top: -5px; width: 16px; height: 16px; border-radius: 50%; background: #c4261d; color: #fff; font-size: 11px; display: flex; align-items: center; justify-content: center; font-family: "Open Sans", sans-serif; }
.tb-apps { display: flex; flex: none; }
.tb-app { width: 44px; height: 44px; position: relative; display: flex; align-items: center; justify-content: center; border-radius: 4px; }
.tb-on::after { content: ""; position: absolute; left: 19px; bottom: 1px; width: 6px; height: 3px; border-radius: 2px; background: #808080; }
.tb-active { width: 38px; margin: 0 3px; background: #fafaf8; }
.tb-active::after { content: ""; position: absolute; left: 11px; bottom: 1px; width: 16px; height: 3px; border-radius: 2px; background: #0a6fd0; }
.app-badge { position: absolute; border-radius: 50%; display: flex; align-items: center; justify-content: center; width: 16px; height: 16px; left: 22px; top: 2px; color: #fff; font-size: 9px; font-family: "Open Sans", sans-serif; }
.badge-w { background: #6a1fa0; font-weight: 700; }
.badge-3 { background: #0a6fd0; font-size: 11px; }
.badge-wg { background: #79818a; }
.badge-photo { background: radial-gradient(circle, #3e5a32 20%, #857f6e 70%); }
.app-l { width: 18px; height: 18px; background: #3a3a3a; border-radius: 2px; color: #e4c26b; font-size: 10px; font-weight: 700; display: flex; align-items: center; justify-content: center; }
.app-v0 { width: 24px; height: 24px; background: #000; color: #fff; font-size: 11px; font-weight: 700; display: flex; align-items: center; justify-content: center; }
.tray { margin-left: auto; display: flex; align-items: center; padding-right: 19px; color: #222; font-family: "Open Sans", sans-serif; }
.tray .ic12 { margin-right: 18px; }
.wifi { margin-right: 8px; }
.batt { margin-left: 6px; width: 18px; }
.clock { display: flex; flex-direction: column; align-items: flex-end; margin-left: 16px; font-size: 11.5px; line-height: 16px; }
```
